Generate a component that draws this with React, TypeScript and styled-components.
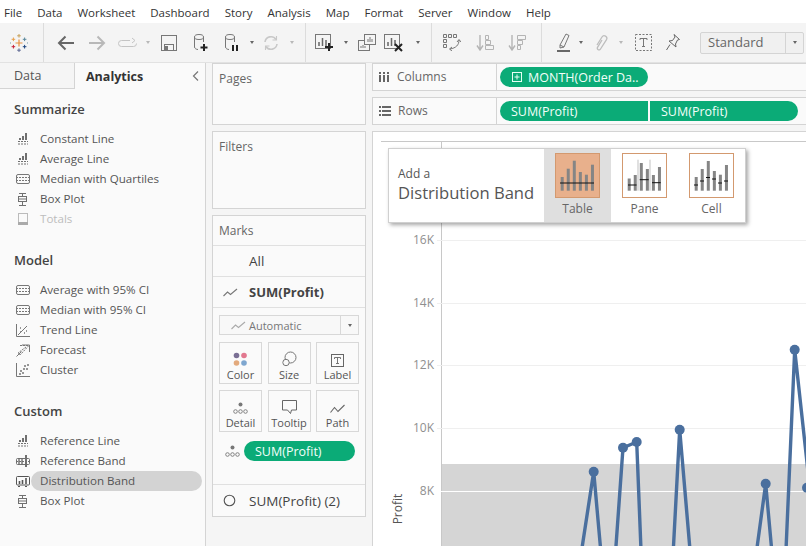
import React from 'react';
import styled, { createGlobalStyle } from 'styled-components';

const GlobalStyle = createGlobalStyle`
  html, body {
    margin: 0;
    padding: 0;
    background: #f5f5f5;
  }
  * {
    box-sizing: border-box;
  }
`;

const FONT = '"Open Sans", "Liberation Sans", sans-serif';

const Page = styled.div`
  width: 806px;
  height: 546px;
  overflow: hidden;
  display: flex;
  flex-direction: column;
  font-family: ${FONT};
  font-size: 12px;
  color: #555;
  background: #f5f5f5;
`;

const MenuBar = styled.div`
  height: 23px;
  flex: none;
  display: flex;
  align-items: center;
  gap: 15px;
  padding: 2px 0 0 4px;
  background: #fff;
  color: #333;
`;

const MenuItem = styled.span`
  font-size: 11.5px;
`;

const Toolbar = styled.div`
  height: 40px;
  flex: none;
  display: flex;
  align-items: center;
  background: #f4f4f4;
  border-bottom: 1px solid #e2e2e2;
`;

const ToolSlot = styled.div<{ $w: number }>`
  width: ${p => p.$w}px;
  flex: none;
  height: 100%;
  display: flex;
  align-items: center;
  justify-content: center;
  svg {
    flex: none;
  }
`;

const ToolDivider = styled.div`
  width: 1px;
  height: 100%;
  background: #dcdcdc;
`;

const Caret = styled.div<{ $dim?: boolean }>`
  flex: none;
  border-left: 2.5px solid transparent;
  border-right: 2.5px solid transparent;
  border-top: 3px solid ${p => (p.$dim ? '#b8b8b8' : '#666')};
`;

const ModeSelect = styled.div`
  flex: none;
  width: 104px;
  height: 22px;
  margin-left: 16px;
  display: flex;
  align-items: center;
  justify-content: space-between;
  border: 1px solid #d4d4d4;
  border-radius: 2px;
  background: #f0f0f0;
  color: #666;
  font-size: 13px;
  padding: 0 0 0 7px;
  line-height: 18px;
`;

const ModeName = styled.span`
  margin-top: -2px;
`;

const ModeArrow = styled.div`
  width: 18px;
  height: 100%;
  display: flex;
  align-items: center;
  justify-content: center;
  border-left: 1px solid #d4d4d4;
`;

const Body = styled.div`
  flex: 1;
  min-height: 0;
  display: flex;
`;

const SidePanel = styled.aside`
  width: 206px;
  flex: none;
  background: #fafafa;
  border-right: 1px solid #d4d4d4;
`;

const Tabs = styled.div`
  display: flex;
  height: 26px;
`;

const DataTab = styled.div`
  width: 75px;
  padding-left: 14px;
  display: flex;
  align-items: center;
  background: #f5f5f5;
  border-right: 1px solid #d4d4d4;
  border-bottom: 1px solid #d4d4d4;
  color: #555;
  font-size: 12.5px;
`;

const AnalyticsTab = styled.div`
  flex: 1;
  padding: 0 6px 0 11px;
  display: flex;
  align-items: center;
  justify-content: space-between;
  color: #333;
  font-weight: 700;
  font-size: 12.5px;
`;

const Section = styled.section`
  padding-top: 11px;
  margin-bottom: 11px;
`;

const SectionTitle = styled.h3`
  margin: 0 0 11px 14px;
  height: 18px;
  line-height: 18px;
  font-size: 13px;
  font-weight: 600;
  color: #444;
`;

const Row = styled.div<{ $off?: boolean }>`
  height: 20px;
  display: flex;
  align-items: center;
  color: ${p => (p.$off ? '#bdbdbd' : '#555')};
`;

const RowIcon = styled.div`
  width: 31px;
  flex: none;
  padding-left: 15px;
  display: flex;
`;

const RowLabel = styled.div<{ $on?: boolean }>`
  flex: 1;
  height: 20px;
  line-height: 20px;
  margin-right: 3px;
  padding-left: 9px;
  border-radius: 10px;
  font-size: 11.6px;
  background: ${p => (p.$on ? '#d3d3d3' : 'transparent')};
`;

const CardsColumn = styled.div`
  width: 154px;
  flex: none;
  margin-left: 6px;
  display: flex;
  flex-direction: column;
  gap: 6px;
`;

const Card = styled.div<{ $h: number }>`
  height: ${p => p.$h}px;
  flex: none;
  border: 1px solid #d4d4d4;
  background: #fafafa;
`;

const CardTitle = styled.div`
  height: 29px;
  padding-left: 6px;
  display: flex;
  align-items: center;
  color: #666;
  font-size: 12px;
`;

const MarkRow = styled.div<{ $strong?: boolean; $h: number }>`
  height: ${p => p.$h}px;
  display: flex;
  align-items: center;
  border-top: 1px solid #e0e0e0;
  color: #444;
  font-size: ${p => (p.$strong ? 13 : 13.5)}px;
  font-weight: ${p => (p.$strong ? 700 : 400)};
`;

const MarkRowIcon = styled.div`
  width: 36px;
  flex: none;
  padding-left: 10px;
  display: flex;
`;

const MarkBody = styled.div`
  height: 177px;
  padding: 7px 6px 0;
  border-top: 1px solid #e0e0e0;
`;

const TypeSelect = styled.div`
  height: 20px;
  display: flex;
  align-items: center;
  border: 1px solid #d8d8d8;
  background: #f8f8f8;
  color: #777;
  font-size: 11px;
`;

const TypeLabel = styled.div`
  flex: 1;
  display: flex;
  align-items: center;
  gap: 3px;
  padding-left: 11px;
`;

const TypeArrow = styled.div`
  width: 18px;
  height: 100%;
  display: flex;
  align-items: center;
  justify-content: center;
  border-left: 1px solid #d8d8d8;
`;

const MarkGrid = styled.div`
  margin-top: 7px;
  display: grid;
  grid-template-columns: 43px 43px 43px;
  justify-content: space-between;
  row-gap: 6px;
`;

const MarkButton = styled.div`
  height: 42px;
  display: flex;
  flex-direction: column;
  align-items: center;
  border: 1px solid #d8d8d8;
  color: #555;
  font-size: 11px;
`;

const MarkButtonIcon = styled.div`
  height: 24px;
  flex: none;
  display: flex;
  align-items: flex-end;
`;

const FieldRow = styled.div`
  margin-top: 9px;
  display: flex;
  align-items: center;
  padding-left: 6px;
  gap: 4px;
`;

const Pill = styled.div<{ $side?: 'left' | 'right'; $w: number; $pad?: number }>`
  width: ${p => p.$w}px;
  height: 20px;
  flex: none;
  display: flex;
  align-items: center;
  gap: 6px;
  padding-left: ${p => p.$pad ?? 11}px;
  background: #0bab77;
  color: #f2fffa;
  font-size: 12.5px;
  white-space: nowrap;
  border-radius: ${p =>
    p.$side === 'left' ? '10px 0 0 10px' : p.$side === 'right' ? '0 10px 10px 0' : '10px'};
`;

const MainColumn = styled.div`
  width: 434px;
  flex: none;
  margin-left: 6px;
  display: flex;
  flex-direction: column;
  gap: 6px;
`;

const Shelf = styled.div`
  height: 28px;
  flex: none;
  display: flex;
  border: 1px solid #d4d4d4;
  border-right: none;
  background: #fafafa;
`;

const ShelfName = styled.div`
  width: 124px;
  flex: none;
  display: flex;
  align-items: center;
  gap: 7px;
  padding: 0 0 1px 6px;
  border-right: 1px solid #d4d4d4;
  color: #666;
  font-size: 12px;
`;

const ShelfPills = styled.div`
  display: flex;
  align-items: center;
  gap: 2px;
  padding-left: 3px;
`;

const ChartPanel = styled.div`
  flex: 1;
  position: relative;
  background: #fff;
  border-left: 1px solid #d4d4d4;
  border-top: 1px solid #d4d4d4;
  svg {
    display: block;
  }
`;

const BandPopup = styled.div`
  position: absolute;
  left: 15px;
  top: 16px;
  width: 358px;
  height: 75px;
  display: flex;
  background: #fff;
  border: 1px solid #d0d0d0;
  box-shadow: 2px 2px 4px rgba(0, 0, 0, 0.35);
`;

const PopupText = styled.div`
  width: 155px;
  flex: none;
  padding: 16px 0 0 9px;
  color: #555;
`;

const PopupSmall = styled.div`
  font-size: 12px;
  line-height: 17px;
`;

const PopupBig = styled.div`
  font-size: 16.6px;
  line-height: 22px;
  white-space: nowrap;
`;

const PopupOption = styled.div<{ $on?: boolean }>`
  width: 67px;
  flex: none;
  padding-top: 4px;
  display: flex;
  flex-direction: column;
  align-items: center;
  gap: 2px;
  background: ${p => (p.$on ? '#dfdfdf' : 'transparent')};
  color: #666;
  font-size: 12px;
`;

const LINE = '#666';

const Bars = () => (
  <svg width="16" height="12" viewBox="0 0 16 12">
    <path d="M4 7V5h2v2zM7 7V3h2v4zM10 7V0h2v7z" fill="#707070" />
    <path d="M3 8.5h10M3 11h10" stroke="#707070" strokeDasharray="2 1" />
  </svg>
);

const Quartiles = () => (
  <svg width="16" height="12" viewBox="0 0 16 12" fill="none" stroke="#777">
    <rect x="1.5" y="1.5" width="13" height="9" rx="1.5" />
    <path d="M1 4.5h14M1 7.5h14" strokeDasharray="2 1" />
  </svg>
);

const BoxPlot = () => (
  <svg width="16" height="13" viewBox="0 0 16 13" fill="none" stroke="#707070">
    <path d="M4 .5h7M7.5 .5v3M7.5 8.5v4M4 12.5h7" />
    <rect x="3.5" y="3.5" width="8" height="5" />
    <path d="M3 6h9" />
  </svg>
);

const Totals = () => (
  <svg width="16" height="13" viewBox="0 0 16 13" fill="none" stroke="#bbb">
    <rect x="3.5" y=".5" width="9" height="11" />
    <rect x="3" y="9" width="10" height="3" fill="#aaa" stroke="none" />
  </svg>
);

const Trend = () => (
  <svg width="16" height="13" viewBox="0 0 16 13" fill="none" stroke="#777">
    <path d="M1.5 0v12.5H15M3 11l9-9" />
    <path d="M5 4h1M9 9h1M11 7h1M5 8h1" strokeWidth="1.4" />
  </svg>
);

const Forecast = () => (
  <svg width="16" height="13" viewBox="0 0 16 13" fill="none" stroke="#777">
    <path d="M1.5 12.5l5-5M7 1h7.5v7" />
    <path d="M5 1.5h9L5 11 3 9l8-6" strokeDasharray="2 1" />
  </svg>
);

const Cluster = () => (
  <svg width="16" height="14" viewBox="0 0 16 14" fill="none" stroke="#777">
    <path d="M1.5 0v13.5H15" />
    <path d="M4 11h2M5 8h2M7 10h2M9 3h2M11 6h2M12 2h2M8 6h2" strokeWidth="1.3" />
  </svg>
);

const RefBand = () => (
  <svg width="16" height="12" viewBox="0 0 16 12" fill="none" stroke="#707070">
    <rect x="1.5" y="3.5" width="13" height="6" rx="1" />
    <path d="M4 3V10M7 3V10" strokeWidth="1.4" />
    <path d="M11 0v12" strokeWidth="2" />
    <path d="M1 6.5h14" strokeDasharray="2 1" />
  </svg>
);

const DistBand = () => (
  <svg width="16" height="12" viewBox="0 0 16 12" fill="none" stroke="#555">
    <rect x="1.5" y="1.5" width="13" height="8.5" rx="1" />
    <path d="M4.5 6v3M7.5 5v4M11 3v6" strokeWidth="1.6" />
    <path d="M3 11.5h2M10 11.5h2" />
  </svg>
);

const MiniLine = ({ color = '#888' }: { color?: string }) => (
  <svg width="15" height="9" viewBox="0 0 15 9" fill="none" stroke={color} strokeWidth="1.1">
    <path d="M.5 8l4-4 3 2.5L14 1" />
  </svg>
);

const DetailDots = () => (
  <svg width="15" height="13" viewBox="0 0 15 13" fill="none" stroke="#777" strokeWidth="0.9">
    <circle cx="7.5" cy="2.5" r="2" fill="#777" stroke="none" />
    <circle cx="2.5" cy="9.5" r="1.8" />
    <circle cx="7.5" cy="9.5" r="1.8" />
    <circle cx="12.5" cy="9.5" r="1.8" />
  </svg>
);

const ColorDots = () => (
  <svg width="15" height="15" viewBox="0 0 15 15">
    <circle cx="3.5" cy="3.5" r="2.8" fill="#7a6f94" />
    <circle cx="11" cy="3.5" r="2.8" fill="#e2788f" />
    <circle cx="3.5" cy="11" r="2.8" fill="#e3aa7d" />
    <circle cx="11" cy="11" r="2.8" fill="#7ea6cf" />
  </svg>
);

const SizeIcon = () => (
  <svg width="16" height="16" viewBox="0 0 16 16" fill="none" stroke="#777">
    <circle cx="9.5" cy="6.5" r="5.5" />
    <circle cx="5" cy="11.5" r="3.2" fill="#fafafa" />
  </svg>
);

const LabelIcon = () => (
  <svg width="13" height="13" viewBox="0 0 13 13" fill="none" stroke="#666">
    <rect x=".5" y=".5" width="12" height="12" />
    <path d="M3.5 5V3.5h6V5M6.5 3.5v6M5 9.5h3" strokeWidth="0.9" />
  </svg>
);

const TooltipIcon = () => (
  <svg width="15" height="15" viewBox="0 0 15 15" fill="none" stroke="#666">
    <path d="M.5 .5h14v9.5H9.5l-1 3.5-3-3.5h-5z" />
  </svg>
);

const PathIcon = () => (
  <svg width="15" height="11" viewBox="0 0 15 11" fill="none" stroke="#666" strokeWidth="1.1">
    <path d="M.5 8.5l4-5 3.5 4L14.5 1" />
  </svg>
);

const MarkCircle = () => (
  <svg width="13" height="13" viewBox="0 0 13 13" fill="none" stroke="#555" strokeWidth="1.1">
    <circle cx="6.5" cy="6.5" r="5.3" />
  </svg>
);

const TableauLogo = () => (
  <svg width="18" height="18" viewBox="0 0 18 18" fill="none" strokeWidth="1">
    <path d="M9 5.5v7M5.5 9h7" stroke="#e8903f" strokeWidth="1.2" />
    <path d="M9 0v3.6M7.2 1.8h3.6" stroke="#c7a15a" />
    <path d="M9 14.4V18M7.2 16.2h3.6" stroke="#5c6692" />
    <path d="M3.4 3.5v3.6M1.6 5.3h3.6" stroke="#e9a14b" />
    <path d="M14.6 3.5v3.6M12.8 5.3h3.6" stroke="#59879b" />
    <path d="M3.4 10.9v3.6M1.6 12.7h3.6" stroke="#c72037" />
    <path d="M14.6 10.9v3.6M12.8 12.7h3.6" stroke="#1f457e" />
    <path d="M0 8v2M18 8v2" stroke="#7199a6" />
  </svg>
);

const ArrowLeft = ({ color }: { color: string }) => (
  <svg width="18" height="16" viewBox="0 0 18 16" fill="none" stroke={color} strokeWidth="2">
    <path d="M17 8H2M8.5 1.5L2 8l6.5 6.5" />
  </svg>
);

const ArrowRight = ({ color }: { color: string }) => (
  <svg width="18" height="16" viewBox="0 0 18 16" fill="none" stroke={color} strokeWidth="2">
    <path d="M1 8h15M9.5 1.5L16 8l-6.5 6.5" />
  </svg>
);

const Redo = () => (
  <svg width="20" height="12" viewBox="0 0 20 12" fill="none" stroke="#c4c4c4">
    <path d="M12 3.5H3.5a3 3 0 0 0 0 6h12a3 3 0 0 0 3-3" />
    <path d="M14 1l3 2.5L14 6" />
  </svg>
);

const SaveIcon = () => (
  <svg width="16" height="16" viewBox="0 0 16 16" fill="none" stroke="#777">
    <rect x=".5" y=".5" width="15" height="15" />
    <rect x="3.5" y="9.5" width="9" height="6" />
    <rect x="4" y="11" width="3" height="4" fill="#777" stroke="none" />
  </svg>
);

const DataSource = ({ badge }: { badge: 'plus' | 'pause' }) => (
  <svg width="17" height="18" viewBox="0 0 17 18" fill="none" stroke="#777">
    <ellipse cx="6" cy="3" rx="4.5" ry="2.5" />
    <path d="M1.5 3v10c0 1.5 2 2.5 3.5 2.5M10.5 3v5" />
    {badge === 'plus' ? (
      <path d="M11 10v7M7.5 13.5h7" stroke="#222" strokeWidth="2" />
    ) : (
      <path d="M9 11v6M13 11v6" stroke="#222" strokeWidth="2" />
    )}
  </svg>
);

const Refresh = () => (
  <svg width="16" height="16" viewBox="0 0 16 16" fill="none" stroke="#c8c8c8" strokeWidth="1.6">
    <path d="M2 7a6 6 0 0 1 11-2.5M14 9a6 6 0 0 1-11 2.5" />
    <path d="M13.5 1v4h-4M2.5 15v-4h4" strokeWidth="1.1" />
  </svg>
);

const NewSheet = () => (
  <svg width="20" height="18" viewBox="0 0 20 18" fill="none" stroke="#777">
    <rect x=".5" y=".5" width="15" height="14" />
    <path d="M4 12V8M7.5 12V4M11 12V6" strokeWidth="1.5" stroke="#666" />
    <path d="M14 9v8M10 13h8" stroke="#222" strokeWidth="2" />
  </svg>
);

const DupSheet = () => (
  <svg width="18" height="17" viewBox="0 0 18 17" fill="none" stroke="#777">
    <rect x=".5" y="6.5" width="11" height="10" fill="#f4f4f4" />
    <rect x="6.5" y=".5" width="11" height="10" fill="#f4f4f4" />
    <path d="M10 8V5M12 8V3M14 8V5M3 14v-2M5 14v-3M7 14v-2" />
  </svg>
);

const ClearSheet = () => (
  <svg width="20" height="18" viewBox="0 0 20 18" fill="none" stroke="#777">
    <rect x=".5" y=".5" width="15" height="14" />
    <path d="M4 12V8M7.5 12V4M11 12V6" strokeWidth="1.5" stroke="#666" />
    <path d="M11 10l7 7M18 10l-7 7" stroke="#222" strokeWidth="2" />
  </svg>
);

const SwapIcon = () => (
  <svg width="18" height="17" viewBox="0 0 18 17" fill="none" stroke="#777">
    <path d="M.5 .5h3v3h-3zM5.5 .5h3v3h-3zM10.5 .5h3v3h-3zM.5 5.5h3v3h-3zM.5 10.5h3v3h-3z" />
    <path d="M16 6c0 5-3 8-9 9" />
    <path d="M14 8l2-2.5L18 8M9 13l-2.5 2L9 17" />
  </svg>
);

const SortIcon = ({ flip }: { flip?: boolean }) => (
  <svg width="18" height="16" viewBox="0 0 18 16" fill="none" stroke="#b4b4b4">
    <path d="M4 0v14M1 10.5L4 15l3-4.5" strokeWidth="1.4" />
    {flip ? (
      <path d="M9.5 .5h8v4h-8zM9.5 5.5h5v4h-5zM9.5 10.5h3v4h-3z" />
    ) : (
      <path d="M9.5 .5h3v4h-3zM9.5 5.5h5v4h-5zM9.5 10.5h8v4h-8z" />
    )}
  </svg>
);

const Highlighter = () => (
  <svg width="14" height="19" viewBox="0 0 14 19" fill="none" stroke="#777">
    <path d="M3 12L9 1l3 1.5L7 14l-4 1z" />
    <path d="M3 12l4 2" />
    <path d="M0 18h13" stroke="#444" strokeWidth="1.6" />
  </svg>
);

const Clip = () => (
  <svg width="15" height="18" viewBox="0 0 15 18" fill="none" stroke="#bdbdbd" strokeWidth="1.3">
    <path d="M3 11l5-8a2.6 2.6 0 0 1 4.5 2.6L6.5 15a1.6 1.6 0 0 1-3-1.6L8 6" />
  </svg>
);

const TextBox = () => (
  <svg width="17" height="17" viewBox="0 0 17 17" fill="none" stroke="#777">
    <rect x=".5" y=".5" width="16" height="16" strokeDasharray="2 1.5" />
    <path d="M5 6V4.5h7V6M8.5 4.5v8M7 12.5h3" />
  </svg>
);

const PinIcon = () => (
  <svg width="14" height="17" viewBox="0 0 14 17" fill="none" stroke="#666">
    <path d="M8 .5l5.5 5-2 .5-2 4 .5 3-7-6 3.5-.5 2.5-3.5z" />
    <path d="M4 10.5L.5 16" />
  </svg>
);

const ColumnsIcon = () => (
  <svg width="11" height="10" viewBox="0 0 11 10" fill="#666">
    <path d="M0 0h2v2H0zM0 3h2v7H0zM4 0h2v2H4zM4 3h2v7H4zM8 0h2v2H8zM8 3h2v7H8z" />
  </svg>
);

const RowsIcon = () => (
  <svg width="12" height="10" viewBox="0 0 12 10" fill="#666">
    <path d="M0 0h2v2H0zM3 0h9v2H3zM0 4h2v2H0zM3 4h9v2H3zM0 8h2v2H0zM3 8h9v2H3z" />
  </svg>
);

const ExpandBox = () => (
  <svg width="10" height="10" viewBox="0 0 10 10" fill="none" stroke="#e6fff6">
    <rect x=".5" y=".5" width="9" height="9" />
    <path d="M2.5 5h5M5 2.5v5" />
  </svg>
);

const Chevron = () => (
  <svg width="7" height="10" viewBox="0 0 7 10" fill="none" stroke="#777" strokeWidth="1.2">
    <path d="M6 .5L1.5 5 6 9.5" />
  </svg>
);

type BandKind = 'table' | 'pane' | 'cell';

const BAND_BARS: Record<BandKind, number[]> = {
  table: [24, 15.7, 7.7, 19, 21.7, 11.7],
  pane: [25.5, 22, 10, 16, 22, 14],
  cell: [24, 16, 8, 18, 21.7, 12],
};

const BAND_LINES: Record<BandKind, number[][]> = {
  table: [[5, 39, 30]],
  pane: [
    [6, 14.6, 32],
    [17.7, 26.7, 26.7],
    [30, 38.7, 29.7],
  ],
  cell: [
    [5, 9, 32],
    [11, 15, 28],
    [17, 21, 24.5],
    [23, 27, 26],
    [29, 33, 30],
    [35, 39, 28],
  ],
};

const BandIcon = ({ kind }: { kind: BandKind }) => (
  <svg width="45" height="45" viewBox="0 0 45 45">
    <rect
      x=".5"
      y=".5"
      width="44"
      height="44"
      fill={kind === 'table' ? '#e8b08c' : '#fff'}
      stroke="#d3996f"
    />
    {BAND_BARS[kind].map((top, i) => (
      <rect key={i} x={5.7 + i * 6.05} y={top} width="3" height={37.7 - top} fill="#858585" />
    ))}
    {kind === 'pane' && <path d="M16 6.7v31M28 6.7v31" stroke="#999" strokeWidth="0.6" />}
    {BAND_LINES[kind].map(([a, b, y], i) => (
      <path key={i} d={`M${a} ${y}H${b}`} stroke="#111" strokeWidth="1" />
    ))}
  </svg>
);

const TICKS = [
  { label: '16K', y: 240 },
  { label: '14K', y: 303 },
  { label: '12K', y: 365 },
  { label: '10K', y: 428 },
  { label: '8K', y: 491 },
];

const PROFIT_LINE =
  'M581.7 550L593.7 471.7L600.7 550M615.7 550L623 447.7L636.7 442L641 550M673.3 550L679.7 429.7L690 550M756.7 550L765.7 483.7L771.7 550M786 550L794.7 349.7L810 490';

const PROFIT_DOTS = [
  [593.7, 471.7],
  [623, 447.7],
  [636.7, 442],
  [679.7, 429.7],
  [765.7, 483.7],
  [794.7, 349.7],
  [807, 487.7],
];

const ProfitChart = () => (
  <svg width="433" height="414" viewBox="373 132 433 414" fontFamily={FONT}>
    <rect x="442" y="464" width="364" height="82" fill="#d5d5d5" />
    <path d="M381 141.5H806M441.5 141V546" stroke="#c8c8c8" fill="none" />
    {TICKS.map(t => (
      <g key={t.label}>
        <path
          d={`M437 ${t.y + 0.5}H806`}
          stroke={t.y > 464 ? '#fff' : '#efefef'}
          fill="none"
        />
        <text x="434" y={t.y + 4} textAnchor="end" fontSize="12" fill="#8f8f8f">
          {t.label}
        </text>
      </g>
    ))}
    <text transform="translate(402 509) rotate(-90)" textAnchor="middle" fontSize="12" fill="#555">
      Profit
    </text>
    <path d={PROFIT_LINE} fill="none" stroke="#4a6f9e" strokeWidth="3.4" strokeLinejoin="round" />
    {PROFIT_DOTS.map(([x, y], i) => (
      <circle key={i} cx={x} cy={y} r="5" fill="#4a6f9e" />
    ))}
  </svg>
);

const MENU = ['File', 'Data', 'Worksheet', 'Dashboard', 'Story', 'Analysis', 'Map', 'Format', 'Server', 'Window', 'Help'];

const SECTIONS: { title: string; rows: { label: string; icon: React.ReactNode; off?: boolean; on?: boolean }[] }[] = [
  {
    title: 'Summarize',
    rows: [
      { label: 'Constant Line', icon: <Bars /> },
      { label: 'Average Line', icon: <Bars /> },
      { label: 'Median with Quartiles', icon: <Quartiles /> },
      { label: 'Box Plot', icon: <BoxPlot /> },
      { label: 'Totals', icon: <Totals />, off: true },
    ],
  },
  {
    title: 'Model',
    rows: [
      { label: 'Average with 95% CI', icon: <Quartiles /> },
      { label: 'Median with 95% CI', icon: <Quartiles /> },
      { label: 'Trend Line', icon: <Trend /> },
      { label: 'Forecast', icon: <Forecast /> },
      { label: 'Cluster', icon: <Cluster /> },
    ],
  },
  {
    title: 'Custom',
    rows: [
      { label: 'Reference Line', icon: <Bars /> },
      { label: 'Reference Band', icon: <RefBand /> },
      { label: 'Distribution Band', icon: <DistBand />, on: true },
      { label: 'Box Plot', icon: <BoxPlot /> },
    ],
  },
];

const MARK_BUTTONS = [
  { label: 'Color', icon: <ColorDots /> },
  { label: 'Size', icon: <SizeIcon /> },
  { label: 'Label', icon: <LabelIcon /> },
  { label: 'Detail', icon: <DetailDots /> },
  { label: 'Tooltip', icon: <TooltipIcon /> },
  { label: 'Path', icon: <PathIcon /> },
];

const BAND_OPTIONS: { label: string; kind: BandKind }[] = [
  { label: 'Table', kind: 'table' },
  { label: 'Pane', kind: 'pane' },
  { label: 'Cell', kind: 'cell' },
];

export default function App() {
  return (
    <Page>
      <GlobalStyle />
      <MenuBar>
        {MENU.map(m => (
          <MenuItem key={m}>{m}</MenuItem>
        ))}
      </MenuBar>

      <Toolbar>
        <ToolSlot $w={38}><TableauLogo /></ToolSlot>
        <ToolSlot $w={10}><ToolDivider /></ToolSlot>
        <ToolSlot $w={36}><ArrowLeft color={LINE} /></ToolSlot>
        <ToolSlot $w={26}><ArrowRight color="#b8b8b8" /></ToolSlot>
        <ToolSlot $w={36}><Redo /></ToolSlot>
        <ToolSlot $w={4}><Caret $dim /></ToolSlot>
        <ToolSlot $w={38}><SaveIcon /></ToolSlot>
        <ToolSlot $w={26}><DataSource badge="plus" /></ToolSlot>
        <ToolSlot $w={36}><DataSource badge="pause" /></ToolSlot>
        <ToolSlot $w={4}><Caret /></ToolSlot>
        <ToolSlot $w={34}><Refresh /></ToolSlot>
        <ToolSlot $w={8}><Caret $dim /></ToolSlot>
        <ToolSlot $w={18}><ToolDivider /></ToolSlot>
        <ToolSlot $w={22}><NewSheet /></ToolSlot>
        <ToolSlot $w={20}><Caret /></ToolSlot>
        <ToolSlot $w={22}><DupSheet /></ToolSlot>
        <ToolSlot $w={32}><ClearSheet /></ToolSlot>
        <ToolSlot $w={16}><Caret /></ToolSlot>
        <ToolSlot $w={10}><ToolDivider /></ToolSlot>
        <ToolSlot $w={32}><SwapIcon /></ToolSlot>
        <ToolSlot $w={34}><SortIcon /></ToolSlot>
        <ToolSlot $w={30}><SortIcon flip /></ToolSlot>
        <ToolSlot $w={18}><ToolDivider /></ToolSlot>
        <ToolSlot $w={28}><Highlighter /></ToolSlot>
        <ToolSlot $w={6}><Caret /></ToolSlot>
        <ToolSlot $w={34}><Clip /></ToolSlot>
        <ToolSlot $w={6}><Caret $dim /></ToolSlot>
        <ToolSlot $w={38}><TextBox /></ToolSlot>
        <ToolSlot $w={22}><PinIcon /></ToolSlot>
        <ModeSelect>
          <ModeName>Standard</ModeName>
          <ModeArrow><Caret /></ModeArrow>
        </ModeSelect>
      </Toolbar>

      <Body>
        <SidePanel>
          <Tabs>
            <DataTab>Data</DataTab>
            <AnalyticsTab>
              Analytics
              <Chevron />
            </AnalyticsTab>
          </Tabs>
          {SECTIONS.map(s => (
            <Section key={s.title}>
              <SectionTitle>{s.title}</SectionTitle>
              {s.rows.map(r => (
                <Row key={r.label} $off={r.off}>
                  <RowIcon>{r.icon}</RowIcon>
                  <RowLabel $on={r.on}>{r.label}</RowLabel>
                </Row>
              ))}
            </Section>
          ))}
        </SidePanel>

        <CardsColumn>
          <Card $h={62}>
            <CardTitle>Pages</CardTitle>
          </Card>
          <Card $h={78}>
            <CardTitle>Filters</CardTitle>
          </Card>
          <Card $h={302}>
            <CardTitle>Marks</CardTitle>
            <MarkRow $h={31}>
              <MarkRowIcon />
              All
            </MarkRow>
            <MarkRow $h={31} $strong>
              <MarkRowIcon><MiniLine color="#777" /></MarkRowIcon>
              SUM(Profit)
            </MarkRow>
            <MarkBody>
              <TypeSelect>
                <TypeLabel>
                  <MiniLine color="#aaa" />
                  Automatic
                </TypeLabel>
                <TypeArrow><Caret /></TypeArrow>
              </TypeSelect>
              <MarkGrid>
                {MARK_BUTTONS.map(b => (
                  <MarkButton key={b.label}>
                    <MarkButtonIcon>{b.icon}</MarkButtonIcon>
                    {b.label}
                  </MarkButton>
                ))}
              </MarkGrid>
              <FieldRow>
                <DetailDots />
                <Pill $w={111}>SUM(Profit)</Pill>
              </FieldRow>
            </MarkBody>
            <MarkRow $h={32}>
              <MarkRowIcon><MarkCircle /></MarkRowIcon>
              SUM(Profit) (2)
            </MarkRow>
          </Card>
        </CardsColumn>

        <MainColumn>
          <Shelf>
            <ShelfName>
              <ColumnsIcon />
              Columns
            </ShelfName>
            <ShelfPills>
              <Pill $w={148} $pad={12}>
                <ExpandBox />
                MONTH(Order Da..
              </Pill>
            </ShelfPills>
          </Shelf>
          <Shelf>
            <ShelfName>
              <RowsIcon />
              Rows
            </ShelfName>
            <ShelfPills>
              <Pill $w={148} $side="left">SUM(Profit)</Pill>
              <Pill $w={148} $side="right">SUM(Profit)</Pill>
            </ShelfPills>
          </Shelf>
          <ChartPanel>
            <ProfitChart />
            <BandPopup>
              <PopupText>
                <PopupSmall>Add a</PopupSmall>
                <PopupBig>Distribution Band</PopupBig>
              </PopupText>
              {BAND_OPTIONS.map(o => (
                <PopupOption key={o.kind} $on={o.kind === 'table'}>
                  <BandIcon kind={o.kind} />
                  {o.label}
                </PopupOption>
              ))}
            </BandPopup>
          </ChartPanel>
        </MainColumn>
      </Body>
    </Page>
  );
}
